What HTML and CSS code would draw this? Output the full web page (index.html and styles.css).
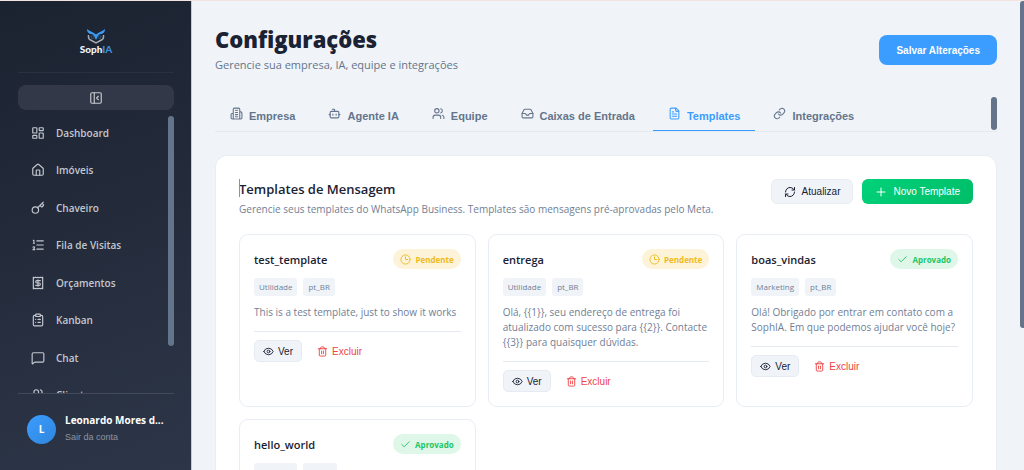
FILE: index.html
```html
<!DOCTYPE html>
<html lang="pt-BR">
<head>
  <meta charset="UTF-8">
  <title>SophIA | Configurações</title>
  <meta name="viewport" content="width=device-width, initial-scale=1.0">
  <link rel="stylesheet" href="styles.css">
</head>

<body>

<!-- icon set -->
<svg class="sprite" aria-hidden="true">
  <symbol id="i-dashboard" viewBox="0 0 24 24"><rect x="3" y="3" width="7" height="9" rx="1"/><rect x="14" y="3" width="7" height="5" rx="1"/><rect x="14" y="12" width="7" height="9" rx="1"/><rect x="3" y="16" width="7" height="5" rx="1"/></symbol>
  <symbol id="i-home" viewBox="0 0 24 24"><path d="M3 10a2 2 0 0 1 .7-1.5l7-6a2 2 0 0 1 2.6 0l7 6A2 2 0 0 1 21 10v9a2 2 0 0 1-2 2H5a2 2 0 0 1-2-2z"/><path d="M15 21v-8a1 1 0 0 0-1-1h-4a1 1 0 0 0-1 1v8"/></symbol>
  <symbol id="i-key" viewBox="0 0 24 24"><circle cx="7.5" cy="15.5" r="5.5"/><path d="m21 2-9.6 9.6M15.5 7.5l2.3 2.3a1 1 0 0 0 1.4 0l2.1-2.1a1 1 0 0 0 0-1.4L19 4"/></symbol>
  <symbol id="i-list" viewBox="0 0 24 24"><path d="M10 5h11M10 12h11M10 19h11M4 4h1v5M4 9h2M6.5 20H3.400c0-1 2.600-1.900 2.600-3.500a1.500 1.500 0 0 0-2.600-1"/></symbol>
  <symbol id="i-receipt" viewBox="0 0 24 24"><path d="M4 2v20l2-1 2 1 2-1 2 1 2-1 2 1 2-1 2 1V2l-2 1-2-1-2 1-2-1-2 1-2-1-2 1z"/><path d="M16 8h-6a2 2 0 1 0 0 4h4a2 2 0 1 1 0 4H8M12 17.500V6.500"/></symbol>
  <symbol id="i-clipboard" viewBox="0 0 24 24"><rect x="8" y="2" width="8" height="4" rx="1"/><path d="M16 4h2a2 2 0 0 1 2 2v14a2 2 0 0 1-2 2H6a2 2 0 0 1-2-2V6a2 2 0 0 1 2-2h2M12 11h4M12 16h4M8 11h.01M8 16h.01"/></symbol>
  <symbol id="i-chat" viewBox="0 0 24 24"><path d="M22 17a2 2 0 0 1-2 2H6.800a2 2 0 0 0-1.400.6l-2.200 2.200A.7.7 0 0 1 2 21.300V5a2 2 0 0 1 2-2h16a2 2 0 0 1 2 2z"/></symbol>
  <symbol id="i-users" viewBox="0 0 24 24"><path d="M16 21v-2a4 4 0 0 0-4-4H6a4 4 0 0 0-4 4v2M16 3.100a4 4 0 0 1 0 7.800M22 21v-2a4 4 0 0 0-3-3.900"/><circle cx="9" cy="7" r="4"/></symbol>
  <symbol id="i-panel" viewBox="0 0 24 24"><rect x="3" y="3" width="18" height="18" rx="2"/><path d="M9 3v18M16 15l-3-3 3-3"/></symbol>
  <symbol id="i-building" viewBox="0 0 24 24"><path d="M6 22V4a2 2 0 0 1 2-2h8a2 2 0 0 1 2 2v18zM6 12H4a2 2 0 0 0-2 2v6a2 2 0 0 0 2 2h2M18 9h2a2 2 0 0 1 2 2v9a2 2 0 0 1-2 2h-2M10 6h4M10 10h4M10 14h4M10 18h4"/></symbol>
  <symbol id="i-bot" viewBox="0 0 24 24"><path d="M12 8V4H8M2 14h2M20 14h2M15 13v2M9 13v2"/><rect x="4" y="8" width="16" height="12" rx="2"/></symbol>
  <symbol id="i-inbox" viewBox="0 0 24 24"><path d="M22 12h-6l-2 3h-4l-2-3H2"/><path d="M5.500 5.100 2 12v6a2 2 0 0 0 2 2h16a2 2 0 0 0 2-2v-6l-3.500-6.900A2 2 0 0 0 16.800 4H7.200a2 2 0 0 0-1.700 1.100z"/></symbol>
  <symbol id="i-file" viewBox="0 0 24 24"><path d="M15 2H6a2 2 0 0 0-2 2v16a2 2 0 0 0 2 2h12a2 2 0 0 0 2-2V7zM14 2v4a2 2 0 0 0 2 2h4M10 9H8M16 13H8M16 17H8"/></symbol>
  <symbol id="i-link" viewBox="0 0 24 24"><path d="M10 13a5 5 0 0 0 7.500.5l3-3a5 5 0 0 0-7-7l-1.800 1.700M14 11a5 5 0 0 0-7.500-.5l-3 3a5 5 0 0 0 7 7l1.800-1.700"/></symbol>
  <symbol id="i-refresh" viewBox="0 0 24 24"><path d="M3 12a9 9 0 0 1 9-9 9.800 9.800 0 0 1 6.700 2.700L21 8M21 3v5h-5M21 12a9 9 0 0 1-9 9 9.800 9.800 0 0 1-6.700-2.700L3 16M8 16H3v5"/></symbol>
  <symbol id="i-plus" viewBox="0 0 24 24"><path d="M4 12h16M12 4v16"/></symbol>
  <symbol id="i-clock" viewBox="0 0 24 24"><circle cx="12" cy="12" r="10"/><path d="M12 6v6h5"/></symbol>
  <symbol id="i-check" viewBox="0 0 24 24"><path d="M20 6 9 17l-5-5"/></symbol>
  <symbol id="i-eye" viewBox="0 0 24 24"><path d="M2 12.300a1 1 0 0 1 0-.6 10.750 10.750 0 0 1 20 0 1 1 0 0 1 0 .6 10.750 10.750 0 0 1-20 0z"/><circle cx="12" cy="12" r="3"/></symbol>
  <symbol id="i-trash" viewBox="0 0 24 24"><path d="M3 6h18M19 6v14a2 2 0 0 1-2 2H7a2 2 0 0 1-2-2V6M8 6V4a2 2 0 0 1 2-2h4a2 2 0 0 1 2 2v2M10 11v6M14 11v6"/></symbol>
</svg>

<div class="app">

  <aside class="sidebar">
    <div class="logo">
      <svg class="owl" viewBox="0 0 36 30" aria-hidden="true">
        <path class="owl-face" d="M3 12v4c0 4 3 6 6 7l9 5 9-5c3-1 6-3 6-7v-4"/>
        <circle class="owl-eye" cx="11" cy="16" r="3"/>
        <circle class="owl-eye" cx="25" cy="16" r="3"/>
        <path class="owl-brow" d="M0 0c5 5 13 6 18 11C23 6 31 5 36 0c0 7-4 10-9 10-4 1-6 4-7 8l-2 4-2-4c-1-4-3-7-7-8C4 10 0 7 0 0z"/>
      </svg>
      <div class="logo-name">Soph<span>IA</span></div>
    </div>

    <button class="collapse" aria-label="Recolher menu"><svg class="icon"><use href="#i-panel"/></svg></button>

    <nav class="menu">
      <div class="menu-list">
        <a href="#"><svg class="icon"><use href="#i-dashboard"/></svg>Dashboard</a>
        <a href="#"><svg class="icon"><use href="#i-home"/></svg>Imóveis</a>
        <a href="#"><svg class="icon"><use href="#i-key"/></svg>Chaveiro</a>
        <a href="#"><svg class="icon"><use href="#i-list"/></svg>Fila de Visitas</a>
        <a href="#"><svg class="icon"><use href="#i-receipt"/></svg>Orçamentos</a>
        <a href="#"><svg class="icon"><use href="#i-clipboard"/></svg>Kanban</a>
        <a href="#"><svg class="icon"><use href="#i-chat"/></svg>Chat</a>
        <a href="#"><svg class="icon"><use href="#i-users"/></svg>Clientes</a>
      </div>
      <span class="menu-scroll"></span>
    </nav>

    <div class="user">
      <div class="avatar">L</div>
      <div class="user-info">
        <div class="user-name">Leonardo Mores d...</div>
        <a class="logout" href="#">Sair da conta</a>
      </div>
    </div>
  </aside>

  <main>
    <header class="page-header">
      <div>
        <h1>Configurações</h1>
        <p>Gerencie sua empresa, IA, equipe e integrações</p>
      </div>
      <button class="save-button">Salvar Alterações</button>
    </header>

    <div class="tabs">
      <button class="tab"><svg class="icon"><use href="#i-building"/></svg>Empresa</button>
      <button class="tab"><svg class="icon"><use href="#i-bot"/></svg>Agente IA</button>
      <button class="tab"><svg class="icon"><use href="#i-users"/></svg>Equipe</button>
      <button class="tab"><svg class="icon"><use href="#i-inbox"/></svg>Caixas de Entrada</button>
      <button class="tab active"><svg class="icon"><use href="#i-file"/></svg>Templates</button>
      <button class="tab"><svg class="icon"><use href="#i-link"/></svg>Integrações</button>
      <span class="tabs-scroll"></span>
    </div>

    <section class="panel">
      <div class="panel-header">
        <div class="panel-title">
          <span class="caret"></span>
          <h2>Templates de Mensagem</h2>
          <p>Gerencie seus templates do WhatsApp Business. Templates são mensagens pré-aprovadas pelo Meta.</p>
        </div>
        <div class="panel-actions">
          <button class="btn"><svg class="icon"><use href="#i-refresh"/></svg>Atualizar</button>
          <button class="btn btn-new"><svg class="icon"><use href="#i-plus"/></svg>Novo Template</button>
        </div>
      </div>

      <div class="template-grid">

        <article class="template-card">
          <div class="card-top">
            <h3>test_template</h3>
            <span class="badge pending"><svg class="icon"><use href="#i-clock"/></svg>Pendente</span>
          </div>
          <div class="tags"><span>Utilidade</span><span>pt_BR</span></div>
          <p class="message">This is a test template, just to show it works</p>
          <div class="card-actions">
            <button class="view"><svg class="icon"><use href="#i-eye"/></svg>Ver</button>
            <button class="delete"><svg class="icon"><use href="#i-trash"/></svg>Excluir</button>
          </div>
        </article>

        <article class="template-card">
          <div class="card-top">
            <h3>entrega</h3>
            <span class="badge pending"><svg class="icon"><use href="#i-clock"/></svg>Pendente</span>
          </div>
          <div class="tags"><span>Utilidade</span><span>pt_BR</span></div>
          <p class="message">Olá, {{1}}, seu endereço de entrega foi atualizado com sucesso para {{2}}. Contacte {{3}} para quaisquer dúvidas.</p>
          <div class="card-actions">
            <button class="view"><svg class="icon"><use href="#i-eye"/></svg>Ver</button>
            <button class="delete"><svg class="icon"><use href="#i-trash"/></svg>Excluir</button>
          </div>
        </article>

        <article class="template-card">
          <div class="card-top">
            <h3>boas_vindas</h3>
            <span class="badge approved"><svg class="icon"><use href="#i-check"/></svg>Aprovado</span>
          </div>
          <div class="tags"><span>Marketing</span><span>pt_BR</span></div>
          <p class="message">Olá! Obrigado por entrar em contato com a SophIA. Em que podemos ajudar você hoje?</p>
          <div class="card-actions">
            <button class="view"><svg class="icon"><use href="#i-eye"/></svg>Ver</button>
            <button class="delete"><svg class="icon"><use href="#i-trash"/></svg>Excluir</button>
          </div>
        </article>

        <article class="template-card">
          <div class="card-top">
            <h3>hello_world</h3>
            <span class="badge approved"><svg class="icon"><use href="#i-check"/></svg>Aprovado</span>
          </div>
          <div class="tags"><span>Utilidade</span><span>en_US</span></div>
        </article>

      </div>
    </section>

    <span class="page-scroll"></span>
  </main>

</div>

</body>
</html>
```
FILE: styles.css
```css
* {
  box-sizing: border-box;
}
body {
  margin: 0;
  font-family: 'Segoe UI', 'Open Sans', sans-serif;
  font-size: 11px;
  background: #f0f4f9;
  color: #1a2233;
}
h1, h2, h3, p {
  margin: 0;
}
button {
  font-family: Arial, 'Liberation Sans', sans-serif;
  font-size: 10px;
  border: none;
  cursor: pointer;
}
a {
  text-decoration: none;
}
.sprite {
  display: none;
}
.icon {
  width: 12px;
  height: 12px;
  fill: none;
  stroke: currentColor;
  stroke-width: 2;
  stroke-linecap: round;
  stroke-linejoin: round;
  flex-shrink: 0;
}
.app {
  display: flex;
  height: 100vh;
  overflow: hidden;
  border-top: 1px solid #f3e4e0;
}

/* sidebar */
.sidebar {
  width: 192px;
  flex-shrink: 0;
  display: flex;
  flex-direction: column;
  padding: 0 17px 0 18px;
  background: linear-gradient(160deg, #1b2230, #2d3648);
  border-right: 1px solid #c5ccd8;
}
.logo {
  display: flex;
  flex-direction: column;
  align-items: center;
  height: 72px;
  padding-top: 28px;
  border-bottom: 1px solid #293041;
}
.owl {
  width: 18px;
  height: 15px;
}
.owl-face {
  fill: none;
  stroke: #a3a8b1;
  stroke-width: 3;
}
.owl-eye {
  fill: none;
  stroke: #35587d;
  stroke-width: 2;
}
.owl-brow {
  fill: #3b9bf5;
}
.logo-name {
  font-family: Lato, sans-serif;
  font-size: 10px;
  font-weight: 900;
  line-height: 10px;
  color: #f4f6fa;
}
.logo-name span {
  color: #3b8fdd;
}
.collapse {
  height: 25px;
  margin-top: 12px;
  display: flex;
  align-items: center;
  justify-content: center;
  flex-shrink: 0;
  border-radius: 8px;
  background: #323847;
  color: #c5c8ce;
}
.collapse .icon {
  width: 14px;
  height: 14px;
}
.menu {
  flex: 1;
  min-height: 0;
  margin-top: 4px;
  position: relative;
  overflow: hidden;
}
.menu-list {
  display: grid;
  grid-auto-rows: 1fr;
  height: 300px;
}
.menu a {
  display: flex;
  align-items: center;
  gap: 11px;
  padding-left: 13px;
  font-size: 10px;
  font-weight: 600;
  color: #c3c7cf;
}
.menu .icon {
  width: 14px;
  height: 14px;
}
.menu-scroll {
  position: absolute;
  top: 2px;
  right: 0;
  width: 6px;
  height: 230px;
  border-radius: 3px;
  background: #64748b;
}
.user {
  display: flex;
  align-items: center;
  gap: 9px;
  height: 77px;
  padding: 0 9px 6px;
  border-top: 1px solid #434b5a;
}
.avatar {
  width: 29px;
  height: 29px;
  flex-shrink: 0;
  border-radius: 50%;
  background: linear-gradient(135deg, #3b9dff, #2f86dc);
  color: #fff;
  font-size: 10px;
  font-weight: 700;
  line-height: 29px;
  text-align: center;
}
.user-info {
  line-height: 15px;
  white-space: nowrap;
}
.user-name {
  font-size: 10px;
  font-weight: 700;
  color: #fff;
}
.logout {
  font-family: Arial, 'Liberation Sans', sans-serif;
  font-size: 9px;
  color: #8f95a1;
}

/* page */
main {
  flex: 1;
  min-width: 0;
  padding: 24px 27px 0 23px;
  position: relative;
}
.page-header {
  display: flex;
  justify-content: space-between;
  align-items: center;
}
.page-header h1 {
  font-size: 22px;
  line-height: 28px;
  font-weight: 800;
}
.page-header p {
  margin-top: 2px;
  font-size: 11px;
  line-height: 20px;
  color: #64748b;
}
.save-button {
  height: 30px;
  padding: 0 17px;
  border-radius: 8px;
  background: #3b9dff;
  color: #fff;
  font-weight: 700;
}
.tabs {
  display: flex;
  gap: 3px;
  height: 35px;
  margin-top: 22px;
  position: relative;
  border-bottom: 1px solid #e5eaf0;
}
.tab {
  padding: 1px 15px 0;
  background: none;
  border-bottom: 1px solid transparent;
  color: #64748b;
  font-size: 11px;
  font-weight: 700;
  white-space: nowrap;
}
.tab .icon {
  width: 13px;
  height: 13px;
  margin-right: 6px;
}
.tab.active {
  color: #3b9dff;
  border-bottom-color: #3b9dff;
}
.tabs-scroll {
  position: absolute;
  top: 0;
  right: 0;
  width: 6px;
  height: 33px;
  border-radius: 3px;
  background: #64748b;
}
.page-scroll {
  position: absolute;
  top: 0;
  right: 0;
  width: 4px;
  height: 327px;
  border-radius: 3px 0 0 3px;
  background: #64748b;
}

/* templates */
.panel {
  margin-top: 23px;
  padding: 23px;
  background: #fff;
  border: 1px solid #e8edf3;
  border-radius: 12px;
}
.panel-header {
  display: flex;
  justify-content: space-between;
  align-items: flex-start;
}
.panel-title {
  position: relative;
}
.caret {
  position: absolute;
  top: 0;
  left: 0;
  width: 1px;
  height: 18px;
  background: #8a93a3;
}
.panel-header h2 {
  font-size: 13px;
  line-height: 20px;
  font-weight: 600;
}
.panel-header p {
  font-size: 10px;
  line-height: 20px;
  color: #718096;
}
.panel-actions {
  display: flex;
  gap: 9px;
}
.btn {
  display: flex;
  align-items: center;
  gap: 6px;
  height: 25px;
  padding: 0 12px;
  border: 1px solid #e8edf4;
  border-radius: 6px;
  background: #f0f4f9;
  color: #1a2233;
  white-space: nowrap;
}
.btn-new {
  padding: 0 13px;
  border: none;
  background: linear-gradient(135deg, #00d27a, #00bd68);
  color: #fff;
}
.template-grid {
  display: grid;
  grid-template-columns: repeat(3, 1fr);
  gap: 12px;
  margin-top: 15px;
}
.template-card {
  min-width: 0;
  padding: 14px;
  border: 1px solid #e8edf4;
  border-radius: 9px;
}
.card-top {
  display: flex;
  justify-content: space-between;
  align-items: center;
}
.card-top h3 {
  font-size: 11px;
  font-weight: 600;
}
.badge {
  display: flex;
  align-items: center;
  gap: 4px;
  height: 20px;
  padding: 0 7px;
  border-radius: 10px;
  font-size: 8px;
  font-weight: 700;
}
.badge .icon {
  width: 11px;
  height: 11px;
}
.pending {
  background: #fdf3d9;
  color: #eebb22;
}
.approved {
  background: #def7e8;
  color: #22c565;
}
.tags {
  display: flex;
  gap: 6px;
  margin-top: 9px;
}
.tags span {
  padding: 0 5px;
  border-radius: 3px;
  background: #f0f4f9;
  color: #718096;
  font-size: 8px;
  line-height: 18px;
}
.message {
  margin-top: 9px;
  font-size: 10px;
  line-height: 15px;
  color: #718096;
}
.card-actions {
  display: flex;
  gap: 6px;
  margin-top: 11px;
  padding-top: 8px;
  border-top: 1px solid #e5eaf1;
}
.card-actions button {
  display: flex;
  align-items: center;
  gap: 4px;
  height: 22px;
  padding: 0 8px;
  border: 1px solid transparent;
  border-radius: 5px;
  background: none;
}
.card-actions .icon {
  width: 11px;
  height: 11px;
}
.card-actions .view {
  background: #f0f4f9;
  border-color: #e6ebf3;
  color: #1a2233;
}
.card-actions .delete {
  color: #ef4444;
}
```
